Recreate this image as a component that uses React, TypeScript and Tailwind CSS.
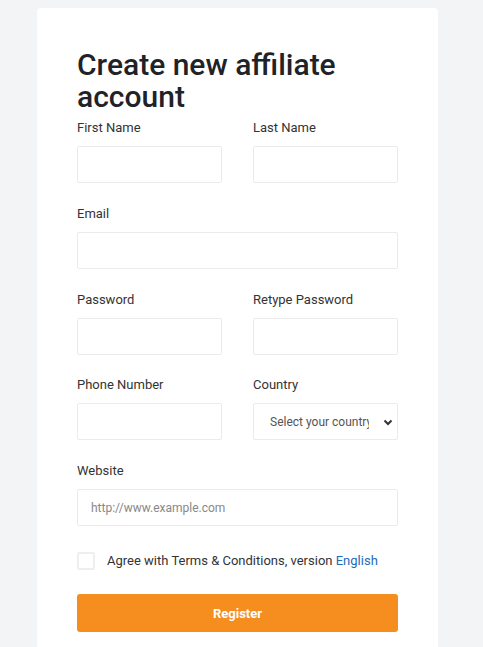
import React from "react";

function Field({ label, children }: { label: string; children: React.ReactNode }) {
  return (
    <div className="mb-[21.75px]">
      <label className="block text-[13px] leading-[18px] text-[#333] mb-[9px]">{label}</label>
      {children}
    </div>
  );
}

const inputCls =
  "block w-full h-[37px] border border-[#ebebeb] rounded-[2px] bg-white px-[13px] text-[12px] text-[#333] placeholder:text-[#888] outline-none";

export default function App() {
  return (
    <div
      className="min-h-[647px] bg-[#f3f4f5] pt-2"
      style={{ fontFamily: "Roboto, 'Liberation Sans', sans-serif" }}
    >
      <div className="ml-[37px] w-[401px] bg-white rounded-[4px] px-10 pt-[41px] pb-10">
        <h1 className="text-[30px] leading-[32px] font-medium text-[#1f2328] mb-[6px]">
          Create new affiliate account
        </h1>
        <div className="grid grid-cols-2 gap-x-[31px]">
          <Field label="First Name">
            <input className={inputCls} />
          </Field>
          <Field label="Last Name">
            <input className={inputCls} />
          </Field>
          <div className="col-span-2">
            <Field label="Email">
              <input className={inputCls} />
            </Field>
          </div>
          <Field label="Password">
            <input type="password" className={inputCls} />
          </Field>
          <Field label="Retype Password">
            <input type="password" className={inputCls} />
          </Field>
          <Field label="Phone Number">
            <input className={inputCls} />
          </Field>
          <Field label="Country">
            <div className="relative">
              <select
                defaultValue=""
                className="block w-full h-[37px] appearance-none border border-[#ebebeb] rounded-[2px] bg-white pl-[16px] pr-[28px] text-[12px] text-[#555] outline-none"
              >
                <option value="" disabled>
                  Select your country
                </option>
              </select>
              <svg
                className="pointer-events-none absolute right-[4px] top-1/2 -translate-y-1/2"
                width="12"
                height="12"
                viewBox="0 0 12 12"
              >
                <path d="M2.5 4.5 L6 8 L9.5 4.5" fill="none" stroke="#333" strokeWidth="2" />
              </svg>
            </div>
          </Field>
          <div className="col-span-2">
            <Field label="Website">
              <input className={inputCls} placeholder="http://www.example.com" />
            </Field>
          </div>
        </div>
        <div className="flex items-center gap-[12px] mt-[3px]">
          <span className="w-[18px] h-[18px] border-2 border-[#eeeeee] rounded-[2px] bg-white" />
          <span className="text-[13px] text-[#333]">
            Agree with Terms &amp; Conditions, version{" "}
            <a className="text-[#1e6bb8]">English</a>
          </span>
        </div>
        <button className="mt-[24px] w-full h-[38px] rounded-[3px] bg-[#f68d1f] text-white text-[13px] font-bold">
          Register
        </button>
      </div>
    </div>
  );
}
